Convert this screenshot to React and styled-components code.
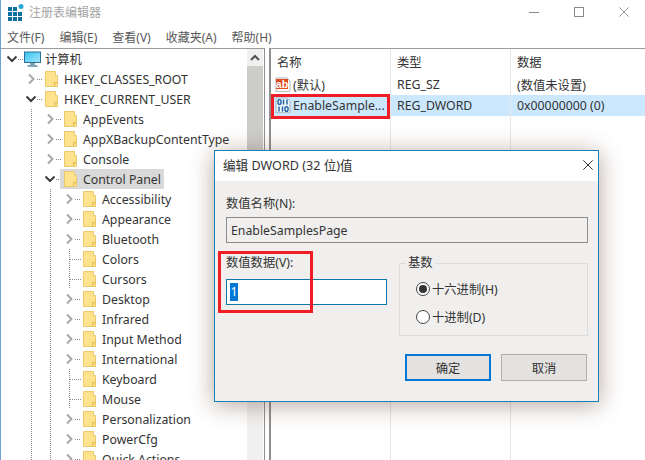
import React from 'react'
import styled, { createGlobalStyle } from 'styled-components'

const GlobalStyle = createGlobalStyle`
html,body{
  margin:0;
  padding:0;
  width:645px;
  height:460px;
  overflow:hidden;
  background:#fff;
  font-family:"Noto Sans","Noto Sans CJK SC",sans-serif;
}
*{box-sizing:border-box;}
`

const Page = styled.div`
position:relative;
width:645px;
height:460px;
overflow:hidden;
display:flex;
flex-direction:column;
border-left:1px solid #6ba3d6;
background:#fff;
color:#333;
font-size:12.3px;
`

const TitleBar = styled.div`
height:26px;
flex:none;
display:flex;
align-items:center;
padding:0 0 2px 7px;
gap:5px;
`

const TitleText = styled.span`
color:#a3a3a3;
font-size:12px;
flex:1;
`

const WindowButtons = styled.div`
display:flex;
align-items:center;
padding-right:16px;
gap:35px;
`

const MenuBar = styled.div`
height:22px;
flex:none;
display:flex;
align-items:center;
padding-left:6px;
gap:15px;
color:#585858;
font-size:12px;
`

const Panes = styled.div`
flex:1;
min-height:0;
display:flex;
gap:4px;
`

const TreePane = styled.div`
width:264px;
flex:none;
display:flex;
border-top:1px solid #9c9c9c;
border-right:1px solid #8f8f8f;
`

const Tree = styled.div`
width:246px;
flex:none;
padding-left:2px;
overflow:hidden;
`

const TreeRow = styled.div`
display:flex;
height:20px;
align-items:center;
white-space:nowrap;
`

const TreeLabel = styled.div`
display:flex;
align-items:center;
height:20px;
padding-right:3px;
background:${({ $selected }) => ($selected ? '#d9d9d9' : 'transparent')};
`

const IconCell = styled.div`
width:23px;
display:flex;
align-items:center;
padding-left:${({ $root }) => ($root ? '2px' : '4px')};
`

const Scrollbar = styled.div`
width:16px;
flex:none;
display:flex;
flex-direction:column;
background:#f0f0f0;
`

const ScrollButton = styled.div`
height:17px;
display:flex;
align-items:center;
justify-content:center;
`

const ScrollThumb = styled.div`
height:330px;
background:#cdcdca;
`

const ListPane = styled.div`
flex:1;
display:flex;
border-top:1px solid #9c9c9c;
border-left:2px solid #8f8f8f;
`

const Column = styled.div`
width:${({ $width }) => $width};
flex:${({ $grow }) => ($grow ? 1 : 'none')};
border-right:${({ $grow }) => ($grow ? 'none' : '1px solid #e6e6e6')};
`

const HeaderCell = styled.div`
height:25px;
padding-left:6px;
display:flex;
align-items:center;
`

const DataCell = styled.div`
height:21px;
display:flex;
align-items:center;
gap:2px;
padding-left:${({ $first }) => ($first ? '4px' : '6px')};
white-space:nowrap;
background:${({ $selected }) => ($selected ? '#cce8ff' : 'transparent')};
`

const RedMark = styled.div`
position:absolute;
border:3px solid #f01c26;
pointer-events:none;
left:${({ $left }) => $left}px;
top:${({ $top }) => $top}px;
width:${({ $w }) => $w}px;
height:${({ $h }) => $h}px;
`

const Dialog = styled.div`
position:absolute;
left:213px;
top:150px;
width:385px;
height:252px;
display:flex;
flex-direction:column;
background:#f0efee;
border:1px solid #1a80b8;
box-shadow:0 3px 22px rgba(90,60,40,.45);
`

const DialogTitle = styled.div`
height:30px;
flex:none;
background:#fff;
display:flex;
align-items:center;
justify-content:space-between;
padding:0 5px 3px 8px;
font-size:12.6px;
`

const DialogBody = styled.div`
flex:1;
padding:15px 10px 0 11px;
display:flex;
flex-direction:column;
`

const FieldLabel = styled.div`
height:16px;
line-height:16px;
`

const NameBox = styled.div`
margin-top:5px;
height:26px;
border:1px solid #8b8b8b;
display:flex;
align-items:center;
padding-left:4px;
`

const ValueRow = styled.div`
position:relative;
margin-top:12px;
display:flex;
gap:12px;
`

const ValueColumn = styled.div`
width:161px;
flex:none;
`

const ValueInput = styled.div`
margin-top:8px;
width:161px;
height:26px;
background:#fff;
border:1px solid #0f78a8;
display:flex;
align-items:center;
padding-left:3px;
`

const SelectedText = styled.span`
background:#0078d7;
color:#fff;
height:18px;
line-height:18px;
width:8px;
text-align:center;
`

const BaseGroup = styled.div`
position:relative;
flex:1;
height:73px;
margin-top:8px;
border:1px solid #dcdcdc;
display:flex;
flex-direction:column;
padding:18px 0 0 16px;
gap:14px;
`

const BaseLegend = styled.span`
position:absolute;
left:6px;
top:-9px;
padding:0 2px;
background:#f0efee;
line-height:16px;
`

const RadioRow = styled.div`
display:flex;
align-items:center;
gap:2px;
height:14px;
`

const RadioCircle = styled.span`
width:14px;
height:14px;
border-radius:50%;
border:1px solid #444;
background:#fff;
display:flex;
align-items:center;
justify-content:center;
&::after{
  content:'';
  width:8px;
  height:8px;
  border-radius:50%;
  background:${({ $checked }) => ($checked ? '#333' : 'transparent')};
}
`

const ButtonRow = styled.div`
margin-top:18px;
display:flex;
justify-content:flex-end;
gap:10px;
padding-right:1px;
`

const DialogButton = styled.div`
width:86px;
height:27px;
display:flex;
align-items:center;
justify-content:center;
background:#e3e2e0;
border:${({ $primary }) => ($primary ? '2px solid #0078d7' : '1px solid #adadad')};
`

const Folder = () => (
  <svg width="13" height="16" viewBox="0 0 13 16">
    <path d="M.5.5h10v4h2v11H.5z" fill="#fde38d" stroke="#ecca6c" />
    <path d="M9.5 15v-3.5h3" fill="#f9d36e" stroke="#e4bb55" />
  </svg>
)

const AppIcon = () => (
  <svg width="16" height="17" viewBox="0 0 16 17">
    <g fill="#0e6f9f">
      {[0, 5, 10].map((x) =>
        [3, 8, 13].map((y) => (x === 10 && y === 3 ? null : <rect key={`${x}-${y}`} x={x} y={y} width="4" height="4" />))
      )}
    </g>
    <circle cx="13" cy="2.5" r="2.5" fill="#29a5d8" />
  </svg>
)

const Computer = () => (
  <svg width="17" height="17" viewBox="0 0 17 17">
    <defs>
      <linearGradient id="screen" x1="0" y1="0" x2="1" y2="1">
        <stop offset="0" stopColor="#36c2f4" />
        <stop offset="1" stopColor="#a6e6fb" />
      </linearGradient>
    </defs>
    <rect x=".5" y="1" width="16" height="10.5" fill="url(#screen)" stroke="#2b6f95" />
    <path d="M6 12h5v2H6z" fill="#7b9fb3" />
    <path d="M3.5 15h10" stroke="#4b7f9c" strokeWidth="1.4" />
  </svg>
)

const StringIcon = () => (
  <svg width="16" height="17" viewBox="0 0 16 17">
    <path d="M1 2h11l3 3v10l-2 1-2-1-2 1-2-1-2 1-2-1-2 1z" fill="#fff" stroke="#b5b5b5" />
    <rect x="1" y="3" width="12" height="10" fill="#e04e20" />
    <text x="7" y="11.5" fontSize="10.5" fontWeight="700" fill="#fff" textAnchor="middle" fontFamily="Liberation Sans">ab</text>
  </svg>
)

const DwordIcon = () => (
  <svg width="16" height="17" viewBox="0 0 16 17">
    <path d="M1 1h11l3 3v11l-2 1-2-1-2 1-2-1-2 1-2-1-2 1z" fill="#eef6fc" stroke="#a8b4bd" />
    <g fill="none" stroke="#1d5fa8" strokeWidth="1.4">
      <ellipse cx="4.5" cy="5" rx="1.6" ry="2.4" />
      <path d="M8.5 2.5v5M12 2.5v5" />
      <path d="M4 9.5v5M7.5 9.5v5" />
      <ellipse cx="11.5" cy="12" rx="1.6" ry="2.4" />
    </g>
  </svg>
)

const CloseGlyph = ({ size = 10, color = '#333' }) => (
  <svg width={size} height={size} viewBox="0 0 10 10">
    <path d="M.3.3l9.4 9.4M9.7.3L.3 9.7" stroke={color} strokeWidth="1" fill="none" />
  </svg>
)

const dotted = { stroke: '#8a8a8a', strokeWidth: 1, strokeDasharray: '1 1' }

const Guide = ({ visible }) => (
  <svg width="19" height="20" viewBox="0 0 19 20" style={{ flex: 'none' }}>
    {visible && <path d="M9.5 0v20" {...dotted} />}
  </svg>
)

const Toggle = ({ state }) => (
  <svg width="19" height="20" viewBox="0 0 19 20" style={{ flex: 'none', overflow: 'visible' }}>
    {state === 'leaf' && <path d="M9.5 0v20M10 10.5h11" {...dotted} />}
    {state !== 'leaf' && <path d="M15 10.5h6" {...dotted} />}
    {state === 'closed' && <path d="M7 5.5l4.5 4.5L7 14.5" fill="none" stroke="#a8a8a8" strokeWidth="2" />}
    {state === 'open' && <path d="M4.5 7.5L9 12l4.5-4.5" fill="none" stroke="#3d3d3d" strokeWidth="2" />}
  </svg>
)

const treeRows = [
  { label: '计算机', depth: 0, state: 'open', root: true },
  { label: 'HKEY_CLASSES_ROOT', depth: 1, state: 'closed' },
  { label: 'HKEY_CURRENT_USER', depth: 1, state: 'open' },
  { label: 'AppEvents', depth: 2, state: 'closed' },
  { label: 'AppXBackupContentType', depth: 2, state: 'closed' },
  { label: 'Console', depth: 2, state: 'closed' },
  { label: 'Control Panel', depth: 2, state: 'open', selected: true },
  { label: 'Accessibility', depth: 3, state: 'closed' },
  { label: 'Appearance', depth: 3, state: 'closed' },
  { label: 'Bluetooth', depth: 3, state: 'closed' },
  { label: 'Colors', depth: 3, state: 'leaf' },
  { label: 'Cursors', depth: 3, state: 'leaf' },
  { label: 'Desktop', depth: 3, state: 'closed' },
  { label: 'Infrared', depth: 3, state: 'closed' },
  { label: 'Input Method', depth: 3, state: 'closed' },
  { label: 'International', depth: 3, state: 'closed' },
  { label: 'Keyboard', depth: 3, state: 'leaf' },
  { label: 'Mouse', depth: 3, state: 'leaf' },
  { label: 'Personalization', depth: 3, state: 'closed' },
  { label: 'PowerCfg', depth: 3, state: 'closed' },
  { label: 'Quick Actions', depth: 3, state: 'closed' },
]

const menus = ['文件(F)', '编辑(E)', '查看(V)', '收藏夹(A)', '帮助(H)']

export default function App() {
  return (
    <Page>
      <GlobalStyle />
      <TitleBar>
        <AppIcon />
        <TitleText>注册表编辑器</TitleText>
        <WindowButtons>
          <svg width="10" height="10" viewBox="0 0 10 10"><path d="M0 5.5h10" stroke="#8a8a8a" /></svg>
          <svg width="10" height="10" viewBox="0 0 10 10"><rect x=".5" y=".5" width="9" height="9" fill="none" stroke="#8a8a8a" /></svg>
          <CloseGlyph color="#9a9a9a" />
        </WindowButtons>
      </TitleBar>
      <MenuBar>
        {menus.map((m) => <span key={m}>{m}</span>)}
      </MenuBar>
      <Panes>
        <TreePane>
          <Tree>
            {treeRows.map((r) => (
              <TreeRow key={r.label}>
                {r.depth > 0 && <Guide />}
                {r.depth > 1 && <Guide visible />}
                {r.depth > 2 && <Guide visible />}
                <Toggle state={r.state} />
                <TreeLabel $selected={r.selected}>
                  <IconCell $root={r.root}>{r.root ? <Computer /> : <Folder />}</IconCell>
                  {r.label}
                </TreeLabel>
              </TreeRow>
            ))}
          </Tree>
          <Scrollbar>
            <ScrollButton>
              <svg width="10" height="7" viewBox="0 0 10 7"><path d="M1 6l4-4 4 4" fill="none" stroke="#505050" strokeWidth="2" /></svg>
            </ScrollButton>
            <ScrollThumb />
          </Scrollbar>
        </TreePane>
        <ListPane>
          <Column $width="120px">
            <HeaderCell>名称</HeaderCell>
            <DataCell $first><StringIcon />(默认)</DataCell>
            <DataCell $first $selected><DwordIcon />EnableSample...</DataCell>
          </Column>
          <Column $width="120px">
            <HeaderCell>类型</HeaderCell>
            <DataCell>REG_SZ</DataCell>
            <DataCell $selected>REG_DWORD</DataCell>
          </Column>
          <Column $grow>
            <HeaderCell>数据</HeaderCell>
            <DataCell>(数值未设置)</DataCell>
            <DataCell $selected>0x00000000 (0)</DataCell>
          </Column>
        </ListPane>
      </Panes>
      <RedMark $left={270} $top={94} $w={119} $h={25} />
      <Dialog>
        <DialogTitle>
          编辑 DWORD (32 位)值
          <CloseGlyph />
        </DialogTitle>
        <DialogBody>
          <FieldLabel>数值名称(N):</FieldLabel>
          <NameBox>EnableSamplesPage</NameBox>
          <ValueRow>
            <ValueColumn>
              <FieldLabel>数值数据(V):</FieldLabel>
              <ValueInput><SelectedText>1</SelectedText></ValueInput>
            </ValueColumn>
            <BaseGroup>
              <BaseLegend>基数</BaseLegend>
              <RadioRow><RadioCircle $checked />十六进制(H)</RadioRow>
              <RadioRow><RadioCircle />十进制(D)</RadioRow>
            </BaseGroup>
            <RedMark $left={-8} $top={-4} $w={95} $h={62} />
          </ValueRow>
          <ButtonRow>
            <DialogButton $primary>确定</DialogButton>
            <DialogButton>取消</DialogButton>
          </ButtonRow>
        </DialogBody>
      </Dialog>
    </Page>
  )
}
